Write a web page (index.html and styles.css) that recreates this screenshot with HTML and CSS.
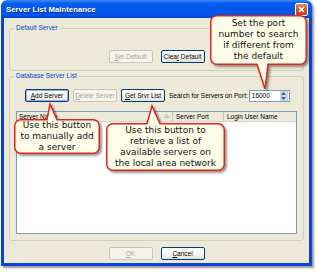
FILE: index.html
```html
<!DOCTYPE html>
<html lang="en">
<head>
    <meta charset="UTF-8">
    <title>Server List Maintenance</title>
    <link rel="stylesheet" href="styles.css">
</head>
<body>

    <div class="window">
        <div class="titlebar">
            <span class="title">Server List Maintenance</span>
            <span class="close-btn">
                <svg width="11" height="11" viewBox="0 0 11 11"><path d="M3 3 L8 8 M8 3 L3 8" stroke="#fff" stroke-width="1.6"/></svg>
            </span>
        </div>
        <div class="frame">
            <fieldset class="group group-default">
                <legend>Default Server</legend>
                <div class="btn-row">
                    <button class="btn" disabled><u>S</u>et Default</button>
                    <button class="btn">Clea<u>r</u> Default</button>
                </div>
            </fieldset>

            <fieldset class="group group-db">
                <legend>Database Server List</legend>
                <div class="toolbar">
                    <button class="btn btn-focus"><u>A</u>dd Server</button>
                    <button class="btn" disabled><u>D</u>elete Server</button>
                    <button class="btn"><u>G</u>et Srvr List</button>
                    <span class="search-label">Search for Servers on Port:</span>
                    <span class="spin">
                        <span class="spin-value">16000</span>
                        <span class="spin-btns">
                            <span class="spin-btn"><svg width="5" height="3" viewBox="0 0 5 3"><path d="M0 3 L2.5 0 L5 3 Z" fill="#4d6185"/></svg></span>
                            <span class="spin-btn"><svg width="5" height="3" viewBox="0 0 5 3"><path d="M0 0 L2.5 3 L5 0 Z" fill="#4d6185"/></svg></span>
                        </span>
                    </span>
                </div>
                <div class="listview">
                    <div class="lv-header">
                        <div class="col col-name">Server Name
                            <svg class="sort" width="5" height="4" viewBox="0 0 5 4"><path d="M0.5 3.5 L2.5 0.5 L4.5 3.5 Z" fill="none" stroke="#a7a6aa" stroke-width="0.8"/></svg>
                        </div>
                        <div class="col col-port">Server Port</div>
                        <div class="col col-user">Login User Name</div>
                    </div>
                </div>
            </fieldset>

            <div class="dialog-buttons">
                <button class="btn" disabled><u>O</u>K</button>
                <button class="btn"><u>C</u>ancel</button>
            </div>
        </div>
    </div>

    <!-- callouts over the dialog -->
    <div class="callout callout-port">
        <svg class="callout-shape" width="97" height="50">
            <path d="M6.75,0.75 H90.25 A6,6 0 0 1 96.25,6.75 V43.25 A6,6 0 0 1 90.25,49.25 H58 L55,74 L47,49.25 H6.75 A6,6 0 0 1 0.75,43.25 V6.75 A6,6 0 0 1 6.75,0.75 Z"/>
        </svg>
        <p class="callout-text">Set the port<br>number to search<br>if different from<br>the default</p>
    </div>

    <div class="callout callout-add">
        <svg class="callout-shape" width="86" height="35">
            <path d="M6.75,0.75 H33 L36,-15 L43,0.75 H79.25 A6,6 0 0 1 85.25,6.75 V28.25 A6,6 0 0 1 79.25,34.25 H6.75 A6,6 0 0 1 0.75,28.25 V6.75 A6,6 0 0 1 6.75,0.75 Z"/>
        </svg>
        <p class="callout-text">Use this button<br>to manually add<br>a server</p>
    </div>

    <div class="callout callout-get">
        <svg class="callout-shape" width="119" height="48">
            <path d="M6.75,0.75 H41 L46,-17 L54,0.75 H112.25 A6,6 0 0 1 118.25,6.75 V41.25 A6,6 0 0 1 112.25,47.25 H6.75 A6,6 0 0 1 0.75,41.25 V6.75 A6,6 0 0 1 6.75,0.75 Z"/>
        </svg>
        <p class="callout-text">Use this button to<br>retrieve a list of<br>available servers on<br>the local area network</p>
    </div>

</body>
</html>
```

FILE: styles.css
```css
body {
    margin: 0;
    background: #fff;
    position: relative;
    width: 317px;
    height: 272px;
    overflow: hidden;
    font-family: "Liberation Sans", Arial, sans-serif;
    font-size: 6.5px;
    color: #000;
}
.window {
    width: 311px;
    height: 266px;
    margin-left: 1px;
    display: flex;
    flex-direction: column;
    border-radius: 6px 6px 0 0;
    box-shadow: 2px 2px 2px rgba(0,0,0,0.4);
}
.titlebar {
    height: 18px;
    flex: none;
    box-sizing: border-box;
    padding: 1px 4px 0 5px;
    display: flex;
    align-items: center;
    justify-content: space-between;
    border-radius: 6px 6px 0 0;
    background: linear-gradient(#3a8cf6 0%, #0a5eef 18%, #0058ee 45%, #0456e8 80%, #0046d0 100%);
}
.title {
    color: #fff;
    font-weight: bold;
    font-size: 7.8px;
    text-shadow: 1px 1px 0 #0b2f9a;
}
.close-btn {
    width: 11px;
    height: 11px;
    margin-top: -1px;
    border: 1px solid #fff;
    border-radius: 2px;
    background: linear-gradient(#e58b6c, #d4512a 50%, #c23d16);
    display: flex;
}
.frame {
    flex: 1;
    display: flex;
    flex-direction: column;
    background: #ece9d8;
    border: 3px solid #0a44dc;
    border-top: none;
    padding: 0 5px;
}
.group {
    margin: 0;
    padding: 0;
    min-width: 0;
    border: 1px solid #d0d0bf;
    border-radius: 3px;
}
.group legend {
    margin-left: 4px;
    padding: 0 2px;
    line-height: 8px;
    color: #0046d5;
}
.group-default {
    margin-top: 6px;
    padding: 18px 0 7px;
}
.group-db {
    margin-top: 1px;
    padding: 9px 0 6px;
}
.btn-row,
.dialog-buttons {
    display: flex;
    justify-content: center;
    gap: 8px;
}
.dialog-buttons {
    margin-top: 6px;
}
.btn {
    width: 44px;
    height: 13px;
    box-sizing: border-box;
    padding: 0;
    border: 1px solid #003c74;
    border-radius: 2px;
    background: linear-gradient(#ffffff, #f4f4f0 60%, #e2e1d8);
    font: inherit;
    line-height: 11px;
    color: #000;
    white-space: nowrap;
}
.btn:disabled {
    border-color: #c9c7ba;
    background: #f5f4ea;
    color: #aca899;
}
.btn-focus {
    box-shadow: inset 0 0 0 1px #95b6f3;
}
.toolbar {
    display: flex;
    align-items: center;
    padding-left: 15px;
    gap: 4px;
}
.search-label {
    margin-left: 0;
    white-space: nowrap;
}
.spin {
    width: 41px;
    height: 12px;
    box-sizing: border-box;
    margin-left: -3px;
    border: 1px solid #7f9db9;
    background: #fff;
    display: flex;
    align-items: center;
    justify-content: space-between;
    padding-left: 2px;
}
.spin-btns {
    display: flex;
    flex-direction: column;
    gap: 0;
    margin-right: 1px;
}
.spin-btn {
    width: 8px;
    height: 5px;
    background: #c7d6f7;
    border: 0 solid #fff;
    display: flex;
    align-items: center;
    justify-content: center;
}
.listview {
    margin: 9px 6px 0;
    height: 123px;
    box-sizing: border-box;
    border: 1px solid #7f9db9;
    background: #fff;
}
.lv-header {
    height: 9px;
    display: flex;
    background: #ebeadb;
    border-bottom: 1px solid #d6d2c2;
    line-height: 9px;
}
.col {
    padding-left: 2px;
    box-sizing: border-box;
    white-space: nowrap;
    border-right: 1px solid #c7c5b2;
    position: relative;
}
.col-name {
    width: 156px;
}
.sort {
    position: absolute;
    right: 3px;
    top: 2px;
}
.col-port {
    width: 51px;
    padding-left: 3px;
}
.col-user {
    flex: 1;
    padding-left: 3px;
    border-right: none;
}
.callout {
    position: absolute;
}
.callout-shape {
    position: absolute;
    left: 0;
    top: 0;
    overflow: visible;
    filter: drop-shadow(2px 2px 1px rgba(0,0,0,0.4));
}
.callout-shape path {
    fill: #ffffe9;
    stroke: #e0241b;
    stroke-width: 1.5;
}
.callout-text {
    position: relative;
    margin: 0;
    font-family: "DejaVu Sans", Verdana, sans-serif;
    font-size: 9px;
    line-height: 11px;
    text-align: center;
    color: #111;
}
.callout-port {
    left: 210px;
    top: 15px;
    width: 97px;
    height: 50px;
    padding-top: 3px;
    box-sizing: border-box;
}
.callout-add {
    left: 14px;
    top: 119px;
    width: 86px;
    height: 35px;
    padding-top: 1px;
    box-sizing: border-box;
}
.callout-get {
    left: 106px;
    top: 123px;
    width: 119px;
    height: 48px;
    padding-top: 2px;
    box-sizing: border-box;
}
```
